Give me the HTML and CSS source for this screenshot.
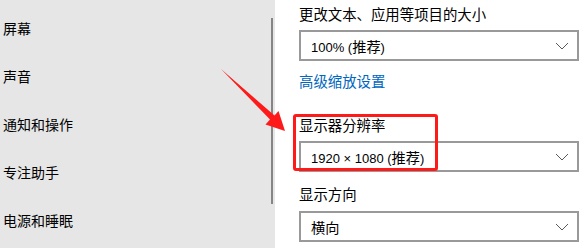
FILE: index.html
```html
<!DOCTYPE html>
<html lang="zh-CN">
<head>
<meta charset="utf-8">
<link rel="stylesheet" href="styles.css">
</head>
<body>
<div class="page">
  <nav class="sidebar">
    <div class="nav-item">屏幕</div>
    <div class="nav-item">声音</div>
    <div class="nav-item">通知和操作</div>
    <div class="nav-item">专注助手</div>
    <div class="nav-item">电源和睡眠</div>
    <div class="scroll-thumb"></div>
  </nav>
  <main class="content">
    <div class="label first">更改文本、应用等项目的大小</div>
    <div class="select s1"><span>100% (<span class="cjk">推荐</span>)</span><svg class="chev" width="14" height="8" viewBox="0 0 14 8"><path d="M1 1 L7 7 L13 1" fill="none" stroke="#5a5a5a" stroke-width="1"/></svg></div>
    <a class="link">高级缩放设置</a>
    <div class="label l2">显示器分辨率</div>
    <div class="select s2"><span>1920 × 1080 (<span class="cjk">推荐</span>)</span><svg class="chev" width="14" height="8" viewBox="0 0 14 8"><path d="M1 1 L7 7 L13 1" fill="none" stroke="#5a5a5a" stroke-width="1"/></svg></div>
    <div class="label l3">显示方向</div>
    <div class="select s3"><span class="cjk">横向</span><svg class="chev" width="14" height="8" viewBox="0 0 14 8"><path d="M1 1 L7 7 L13 1" fill="none" stroke="#5a5a5a" stroke-width="1"/></svg></div>
  </main>
  <div class="highlight"></div>
  <svg class="arrow" width="587" height="248" viewBox="0 0 587 248">
    <polygon points="221,69 270,119.5 265.5,124.5 285,131 278.5,111 274.5,115.5" fill="#ff1a1a"/>
  </svg>
</div>
</body>
</html>
```
FILE: styles.css
```css
html, body {
  margin: 0;
  padding: 0;
  background: #ffffff;
}
.page {
  position: relative;
  display: flex;
  width: 587px;
  height: 248px;
  overflow: hidden;
  font-family: "Noto Sans CJK SC", "Liberation Sans", sans-serif;
  font-size: 14px;
  color: #000;
}
.sidebar {
  position: relative;
  width: 275px;
  flex: none;
  background: #e6e6e6;
  padding-top: 4px;
  box-sizing: border-box;
}
.nav-item {
  height: 48px;
  line-height: 48px;
  padding-left: 3px;
}
.scroll-thumb {
  position: absolute;
  left: 271px;
  top: 18px;
  width: 2px;
  height: 186px;
  background: #858585;
}
.content {
  flex: 1;
  padding-left: 24px;
  padding-top: 4px;
}
.label {
  height: 20px;
  line-height: 20px;
  font-size: 14.4px;
}
.l2 { margin-top: 24px; }
.l3 { margin-top: 12px; }
.select {
  box-sizing: border-box;
  width: 280px;
  height: 31px;
  border: 2px solid #999999;
  display: flex;
  align-items: center;
  justify-content: space-between;
  padding: 0 8px 0 10px;
  margin-top: 6px;
  font-family: "Liberation Sans", "Noto Sans CJK SC", sans-serif;
  font-size: 13px;
}
.cjk {
  font-family: "Noto Sans CJK SC", sans-serif;
  font-size: 14.2px;
}
.s3 { margin-top: 7px; }
.chev { display: block; }
.link {
  display: block;
  margin-top: 10px;
  height: 20px;
  line-height: 20px;
  color: #0067c0;
  font-size: 14.4px;
}
.highlight {
  position: absolute;
  left: 293px;
  top: 114px;
  width: 145px;
  height: 57px;
  box-sizing: border-box;
  border: 3px solid #ff1a1a;
  border-radius: 3px;
}
.arrow {
  position: absolute;
  left: 0;
  top: 0;
  pointer-events: none;
}
```
